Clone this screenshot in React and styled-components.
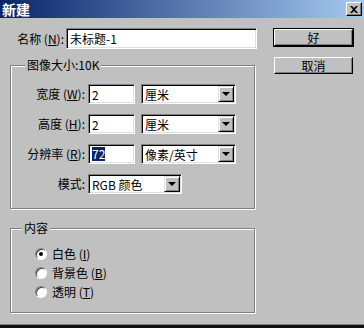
import styled, { createGlobalStyle } from 'styled-components';

const GlobalStyle = createGlobalStyle`
  html, body {
    margin: 0;
    padding: 0;
    background: #c0c0c0;
  }
  body {
    font-family: "Noto Sans CJK SC", "DejaVu Sans", sans-serif;
    font-size: 12px;
    color: #000;
  }
`;

const Window = styled.div`
  width: 364px;
  height: 328px;
  box-sizing: border-box;
  background: #c0c0c0;
  border-bottom: 3px solid #111;
  box-shadow: inset 0 -1px #808080;
  display: flex;
  flex-direction: column;
`;

const TitleBar = styled.div`
  height: 18px;
  display: flex;
  align-items: center;
  justify-content: space-between;
  padding: 0 2px 0 2px;
  background: linear-gradient(to right, #0a246a, #a6caf0);
`;

const Title = styled.span`
  color: #fff;
  font-size: 14px;
  font-weight: bold;
  line-height: 18px;
`;

const CloseButton = styled.div`
  width: 16px;
  height: 14px;
  box-sizing: border-box;
  background: #c0c0c0;
  border-top: 1px solid #fff;
  border-left: 1px solid #fff;
  border-right: 1px solid #000;
  border-bottom: 1px solid #000;
  box-shadow: inset -1px -1px #808080;
  display: flex;
  align-items: center;
  justify-content: center;
`;

const Body = styled.div`
  display: flex;
  padding: 10px 0 0 10px;
`;

const Main = styled.div`
  display: flex;
  flex-direction: column;
`;

const NameRow = styled.div`
  display: flex;
  align-items: center;
  gap: 2px;
`;

const Label = styled.span`
  width: ${(p) => p.$width}px;
  text-align: right;
  white-space: nowrap;
  line-height: 16px;

  u {
    text-decoration: underline;
  }
`;

const Field = styled.div`
  width: ${(p) => p.$width}px;
  height: ${(p) => p.$height || 20}px;
  box-sizing: border-box;
  background: #fff;
  border-top: 1px solid #808080;
  border-left: 1px solid #808080;
  border-right: 1px solid #fff;
  border-bottom: 1px solid #fff;
  box-shadow: inset 1px 1px #000, inset -1px -1px #dfdfdf;
  display: flex;
  align-items: center;
  padding: 0 2px 0 3px;
  white-space: nowrap;
  overflow: hidden;
`;

const Selected = styled.span`
  background: #0a246a;
  color: #fff;
  line-height: 14px;
`;

const SelectValue = styled.span`
  flex: 1;
`;

const ArrowButton = styled.div`
  width: 16px;
  height: 16px;
  box-sizing: border-box;
  background: #c0c0c0;
  border-top: 1px solid #dfdfdf;
  border-left: 1px solid #dfdfdf;
  border-right: 1px solid #000;
  border-bottom: 1px solid #000;
  box-shadow: inset 1px 1px #fff, inset -1px -1px #808080;
  display: flex;
  align-items: center;
  justify-content: center;
  margin-right: -1px;
`;

const Arrow = styled.div`
  width: 0;
  height: 0;
  border-left: 4px solid transparent;
  border-right: 4px solid transparent;
  border-top: 4px solid #000;
`;

const Group = styled.div`
  position: relative;
  width: 245px;
  height: ${(p) => p.$height}px;
  box-sizing: border-box;
  margin-top: ${(p) => p.$top}px;
  border: 1px solid #808080;
  box-shadow: inset 1px 1px #fff, 1px 1px #fff;
  padding: ${(p) => p.$padding};
`;

const Legend = styled.span`
  position: absolute;
  top: -9px;
  left: 14px;
  padding: 0 2px;
  background: #c0c0c0;
  line-height: 16px;
`;

const FormGrid = styled.div`
  display: grid;
  grid-template-columns: 74px 47px 95px;
  grid-auto-rows: 20px;
  column-gap: 3px;
  row-gap: 10px;
  align-items: center;

  & > :nth-child(3n) {
    margin-left: 3px;
  }
`;

const ModeCell = styled.div`
  grid-column: 2 / span 2;
`;

const RadioList = styled.div`
  display: flex;
  flex-direction: column;
`;

const RadioRow = styled.div`
  height: 19px;
  display: flex;
  align-items: center;
  gap: 5px;
`;

const RadioDot = styled.div`
  width: 12px;
  height: 12px;
  box-sizing: border-box;
  border-radius: 50%;
  background: #fff;
  border: 1px solid;
  border-color: #808080 #fff #fff #808080;
  box-shadow: inset 1px 1px #404040;
  display: flex;
  align-items: center;
  justify-content: center;

  &::after {
    content: '';
    width: 4px;
    height: 4px;
    border-radius: 50%;
    background: ${(p) => (p.$checked ? '#000' : 'transparent')};
  }
`;

const Side = styled.div`
  display: flex;
  flex-direction: column;
  gap: 9px;
  margin-left: 16px;
`;

const Button = styled.div`
  width: 81px;
  height: 19px;
  box-sizing: border-box;
  background: #c0c0c0;
  border: 1px solid ${(p) => (p.$default ? '#000' : 'transparent')};
  display: flex;
`;

const ButtonFace = styled.div`
  flex: 1;
  box-sizing: border-box;
  border-top: 1px solid #fff;
  border-left: 1px solid #fff;
  border-right: 1px solid #000;
  border-bottom: 1px solid #000;
  box-shadow: inset -1px -1px #808080;
  display: flex;
  align-items: center;
  justify-content: center;
  line-height: 14px;
`;

const Select = ({ width, value }) => (
  <Field $width={width} style={{ paddingRight: 2 }}>
    <SelectValue>{value}</SelectValue>
    <ArrowButton>
      <Arrow />
    </ArrowButton>
  </Field>
);

const App = () => (
  <>
    <GlobalStyle />
    <Window>
      <TitleBar>
        <Title>新建</Title>
        <CloseButton>
          <svg width="8" height="7" viewBox="0 0 8 7">
            <path d="M0 0h2l2 2 2-2h2L5 3.5 8 7H6L4 5 2 7H0l3-3.5z" fill="#000" />
          </svg>
        </CloseButton>
      </TitleBar>
      <Body>
        <Main>
          <NameRow>
            <Label $width={54}>
              名称 (<u>N</u>):
            </Label>
            <Field $width={191} $height={21}>未标题-1</Field>
          </NameRow>

          <Group $top={16} $height={144} $padding="18px 0 0 0">
            <Legend>图像大小:10K</Legend>
            <FormGrid>
              <Label $width={74}>
                宽度 (<u>W</u>):
              </Label>
              <Field $width={47}>2</Field>
              <Select width={95} value="厘米" />

              <Label $width={74}>
                高度 (<u>H</u>):
              </Label>
              <Field $width={47}>2</Field>
              <Select width={95} value="厘米" />

              <Label $width={74}>
                分辨率 (<u>R</u>):
              </Label>
              <Field $width={47}>
                <Selected>72</Selected>
              </Field>
              <Select width={95} value="像素/英寸" />

              <Label $width={74}>模式:</Label>
              <ModeCell>
                <Select width={94} value="RGB 颜色" />
              </ModeCell>
            </FormGrid>
          </Group>

          <Group $top={19} $height={85} $padding="15px 0 0 24px">
            <Legend style={{ left: 11 }}>内容</Legend>
            <RadioList>
              <RadioRow>
                <RadioDot $checked />
                <span>
                  白色 (<u>I</u>)
                </span>
              </RadioRow>
              <RadioRow>
                <RadioDot />
                <span>
                  背景色 (<u>B</u>)
                </span>
              </RadioRow>
              <RadioRow>
                <RadioDot />
                <span>
                  透明 (<u>T</u>)
                </span>
              </RadioRow>
            </RadioList>
          </Group>
        </Main>

        <Side>
          <Button $default>
            <ButtonFace>好</ButtonFace>
          </Button>
          <Button>
            <ButtonFace>取消</ButtonFace>
          </Button>
        </Side>
      </Body>
    </Window>
  </>
);

export default App;
